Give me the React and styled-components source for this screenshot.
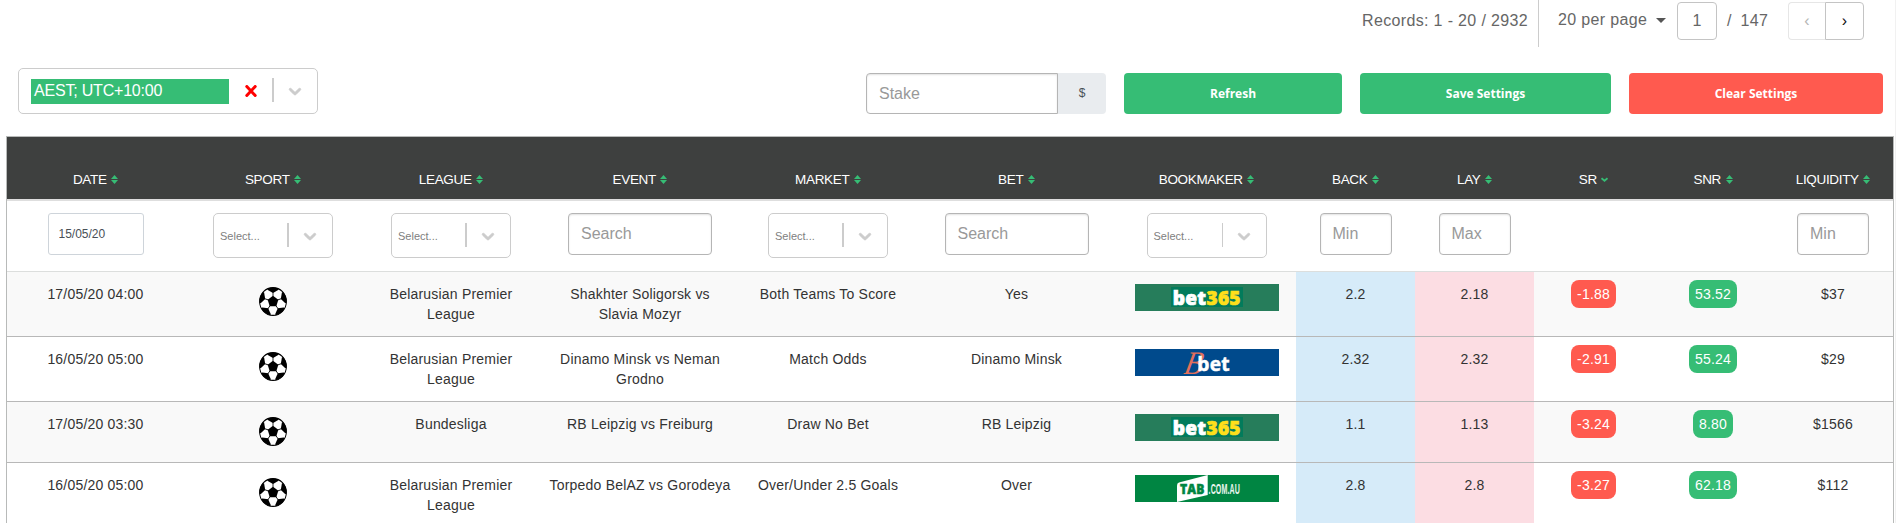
import React from 'react';
import styled, { createGlobalStyle } from 'styled-components';

const GREEN = '#36bd75';
const RED = '#ff5a4f';

const GlobalStyle = createGlobalStyle`
  * { box-sizing: border-box; }
  body {
    margin: 0;
    background: #fff;
    color: #333;
    font-family: Arial, "Liberation Sans", sans-serif;
    font-size: 14px;
    overflow: hidden;
  }
  input, button { font-family: inherit; margin: 0; }
`;

const Page = styled.div`
  height: 523px;
  overflow: hidden;
  padding: 0 1px 0 6px;
  border-right: 1px solid #f1f1f1;
`;

const Pagination = styled.div`
  height: 47px;
  display: flex;
  justify-content: flex-end;
  align-items: flex-start;
  padding-right: 30px;
  color: #666;
  font-size: 16px;
  letter-spacing: 0.35px;
  line-height: 41px;
`;

const Records = styled.div`
  height: 47px;
  padding-right: 10px;
  border-right: 1px solid #ccc;
`;

const PerPage = styled.div`
  display: flex;
  align-items: center;
  width: 128px;
  padding-left: 19px;
  line-height: 40px;
`;

const Caret = styled.span`
  margin-left: 9px;
  border: 5px solid transparent;
  border-top-color: #555;
  border-bottom: 0;
`;

const PageInput = styled.input`
  width: 40px;
  height: 38px;
  margin: 2px 10px 0;
  border: 1px solid #c4c4c4;
  border-radius: 4px;
  text-align: center;
  font-size: 16px;
  color: #666;
  padding: 0;
`;

const Total = styled.div`
  width: 61px;
  word-spacing: 4px;
  white-space: nowrap;
`;

const PageButton = styled.button`
  width: ${(p) => (p.$side === 'left' ? 37 : 39)}px;
  height: 38px;
  margin-top: 2px;
  padding: 0 0 1px;
  background: #fff;
  font-size: 16px;
  color: ${(p) => (p.$side === 'left' ? '#b5b5b5' : '#111')};
  border: 1px solid ${(p) => (p.$side === 'left' ? '#e6e6e6' : '#c4c4c4')};
  border-right-width: ${(p) => (p.$side === 'left' ? 0 : 1)}px;
  border-radius: ${(p) => (p.$side === 'left' ? '4px 0 0 4px' : '0 4px 4px 0')};
`;

const Controls = styled.div`
  height: 89px;
  display: flex;
  padding: 21px 11px 0 12px;
`;

const Zone = styled.div`
  width: 300px;
  height: 46px;
  display: flex;
  align-items: center;
  padding: 0 12px 0 12px;
  margin-right: auto;
  border: 1px solid #ccc;
  border-radius: 5px;
`;

const ZoneValue = styled.div`
  width: 198px;
  height: 25px;
  padding-left: 3px;
  background: ${GREEN};
  color: #fff;
  font-size: 16px;
  line-height: 23px;
  letter-spacing: -0.2px;
`;

const ClearMark = styled.svg`
  width: 12px;
  height: 12px;
  margin: 0 15px 0 16px;
`;

const StakeGroup = styled.div`
  display: flex;
  margin: 5px 18px 0 0;
`;

const TextInput = styled.input`
  width: ${(p) => p.$width}px;
  height: ${(p) => p.$height || 42}px;
  padding: 0 12px;
  border: 1px solid #b5b5b5;
  border-radius: ${(p) => (p.$joined ? '4px 0 0 4px' : '4px')};
  box-shadow: inset 0 1px 2px #e2e2e2;
  font-size: 16px;
  background: #fff;
  &::placeholder { color: #999; opacity: 1; }
`;

const Currency = styled.div`
  width: 48px;
  height: 41px;
  border-radius: 0 4px 4px 0;
  background: #e9ecef;
  color: #495057;
  font-size: 12px;
  line-height: 41px;
  text-align: center;
`;

const ActionButton = styled.button`
  width: ${(p) => p.$width}px;
  height: 41px;
  margin: 5px 0 0 ${(p) => p.$gap || 0}px;
  padding: 0;
  border: 0;
  border-radius: 4px;
  background: ${(p) => (p.$danger ? RED : GREEN)};
  color: #fff;
  font: 700 12px "Open Sans", sans-serif;
`;

const Table = styled.div`
  width: 1888px;
  border: 1px solid #b8bab9;
  border-bottom: 0;
`;

const Row = styled.div`
  display: grid;
  grid-template-columns: 177px 178px 178px 200px 176px 201px 179px 119px 119px 119px 120px 1fr;
`;

const HeadRow = styled(Row)`
  height: 64px;
  background: #3e403f;
  border-bottom: 2px solid #dedede;
`;

const HeadCell = styled.div`
  display: flex;
  justify-content: center;
  align-items: center;
  gap: 4.5px;
  padding-top: 23px;
  color: #fff;
  font-size: 13.5px;
  letter-spacing: -0.33px;
`;

const FilterRow = styled(Row)`
  height: 71px;
  padding-top: 12px;
  border-bottom: 1px solid #dcdedd;
`;

const FilterCell = styled.div`
  display: flex;
  justify-content: center;
  align-items: flex-start;
`;

const DateInput = styled.input`
  width: 96px;
  height: 42px;
  padding: 0 10px;
  border: 1px solid #ced4da;
  border-radius: 3px;
  color: #495057;
  font-size: 12px;
`;

const SelectBox = styled.div`
  width: 120px;
  height: 45px;
  display: flex;
  align-items: center;
  padding: 0 12px 0 6px;
  border: 1px solid #ccc;
  border-radius: 5px;
  color: #808080;
  font-size: 11px;
`;

const Separator = styled.span`
  width: ${(p) => p.$width || 2}px;
  height: 24px;
  margin: 0 11px 2px auto;
  background: #ccc;
`;

const DataRow = styled(Row)`
  background: ${(p) => (p.$striped ? '#f9f9f9' : '#fff')};
  border-bottom: 1px solid #b8b8b8;
`;

const Cell = styled.div`
  min-height: 60px;
  padding: 12px ${(p) => p.$side ?? 8}px;
  text-align: center;
  line-height: 20px;
  letter-spacing: 0.2px;
  background: ${(p) => p.$tint || 'transparent'};
`;

const MediaCell = styled(Cell)`
  display: flex;
  justify-content: center;
  align-items: flex-start;
  padding-top: ${(p) => p.$top}px;
  padding-bottom: 0;
`;

const Badge = styled.span`
  display: inline-block;
  height: 28px;
  margin: -4px 0;
  padding: 4px 6px;
  border-radius: 8px;
  background: ${(p) => (p.$danger ? RED : GREEN)};
  color: #fff;
`;

const Chevron = () => (
  <svg width="20" height="20" viewBox="0 0 20 20" fill="#ccc" stroke="#ccc" strokeWidth="0.7">
    <path d="M4.516 7.548c0.436-0.446 1.043-0.481 1.576 0l3.908 3.747 3.908-3.747c0.533-0.481 1.141-0.446 1.574 0 0.436 0.445 0.408 1.197 0 1.615-0.406 0.418-4.695 4.502-4.695 4.502-0.217 0.223-0.502 0.335-0.787 0.335s-0.57-0.112-0.789-0.335c0 0-4.287-4.084-4.695-4.502s-0.436-1.17 0-1.615z" />
  </svg>
);

const SortIcon = ({ active }) =>
  active ? (
    <svg width="7" height="9" viewBox="0 0 7 9">
      <path d="M0.5 3.2 L3.5 5.8 L6.5 3.2" fill="none" stroke={GREEN} strokeWidth="1.8" />
    </svg>
  ) : (
    <svg width="7" height="9" viewBox="0 0 7 9" fill={GREEN}>
      <path d="M3.5 0 L7 4 H0 Z M0 5 H7 L3.5 9 Z" />
    </svg>
  );

const patchAngles = [0, 72, 144, 216, 288];

const Ball = () => (
  <svg width="28" height="29" viewBox="0 0 28 28" preserveAspectRatio="none">
    <defs>
      <clipPath id="ball"><circle cx="14" cy="14" r="13.6" /></clipPath>
    </defs>
    <circle cx="14" cy="14" r="13.4" fill="#fff" />
    <g clipPath="url(#ball)">
      {patchAngles.map((a) => (
        <g key={a} transform={`rotate(${a} 14 14)`}>
          <path d="M7.4 0 L8.8 3 L14 5.8 L19.2 3 L20.6 0 Z" />
          <path d="M14 5 V9.5" stroke="#000" strokeWidth="0.8" />
        </g>
      ))}
      <path d="M14 8.5 L19.3 12.3 L17.3 18.6 H10.7 L8.7 12.3 Z" />
    </g>
    <circle cx="14" cy="14" r="13.4" fill="none" stroke="#000" strokeWidth="1" />
  </svg>
);

const logoFont = '"Open Sans", sans-serif';

const Bet365Logo = () => (
  <svg width="144" height="27">
    <rect width="144" height="27" fill="#267d5b" />
    <rect x="36" y="3" width="72" height="20" fill="#027b5b" />
    <text y="20.6" fontFamily={logoFont} fontWeight="800" fontSize="19.5" strokeWidth="0.7">
      <tspan x="37.8" fill="#fff" stroke="#fff" textLength="33.5" lengthAdjust="spacingAndGlyphs">bet</tspan>
      <tspan x="71.6" fill="#ffdf1b" stroke="#ffdf1b" textLength="34" lengthAdjust="spacingAndGlyphs">365</tspan>
    </text>
  </svg>
);

const BbetLogo = () => (
  <svg width="144" height="27" overflow="visible">
    <rect width="144" height="27" fill="#004a8c" />
    <text
      transform="translate(48 24.5) skewX(-12) scale(0.88 1)"
      fontFamily='"Liberation Serif", serif'
      fontStyle="italic"
      fontSize="33"
      fill="#e2705c"
    >B</text>
    <text x="62.3" y="22.4" fontFamily={logoFont} fontWeight="700" fontSize="19.5" fill="#fff" stroke="#fff" strokeWidth="0.5" textLength="32.4" lengthAdjust="spacingAndGlyphs">bet</text>
  </svg>
);

const TabLogo = () => (
  <svg width="144" height="27">
    <rect width="144" height="27" fill="#008542" />
    <path d="M42 10.5 Q42 8.2 44 7.6 L72.7 0 V20 L42 27 Z" fill="#fff" />
    <text x="45" y="18.6" fontFamily={logoFont} fontWeight="800" fontSize="13.4" fill="#008542" stroke="#008542" strokeWidth="0.5" textLength="24.6" lengthAdjust="spacingAndGlyphs">TAB</text>
    <text transform="translate(73.6 18.7) scale(0.512 1)" fontFamily='"Liberation Sans", sans-serif' fontWeight="700" fontSize="13.8" fill="#e9f5ee">.COM.AU</text>
  </svg>
);

const logos = { bet365: Bet365Logo, bbet: BbetLogo, tab: TabLogo };

const Select = ({ thin }) => (
  <SelectBox>
    Select...
    <Separator $width={thin ? 1 : 2} />
    <Chevron />
  </SelectBox>
);

const headings = ['DATE', 'SPORT', 'LEAGUE', 'EVENT', 'MARKET', 'BET', 'BOOKMAKER', 'BACK', 'LAY', 'SR', 'SNR', 'LIQUIDITY'];

const rows = [
  { date: '17/05/20 04:00', league: 'Belarusian Premier League', event: 'Shakhter Soligorsk vs Slavia Mozyr', market: 'Both Teams To Score', bet: 'Yes', book: 'bet365', back: '2.2', lay: '2.18', sr: '-1.88', snr: '53.52', liq: '$37' },
  { date: '16/05/20 05:00', league: 'Belarusian Premier League', event: 'Dinamo Minsk vs Neman Grodno', market: 'Match Odds', bet: 'Dinamo Minsk', book: 'bbet', back: '2.32', lay: '2.32', sr: '-2.91', snr: '55.24', liq: '$29' },
  { date: '17/05/20 03:30', league: 'Bundesliga', event: 'RB Leipzig vs Freiburg', market: 'Draw No Bet', bet: 'RB Leipzig', book: 'bet365', back: '1.1', lay: '1.13', sr: '-3.24', snr: '8.80', liq: '$1566' },
  { date: '16/05/20 05:00', league: 'Belarusian Premier League', event: 'Torpedo BelAZ vs Gorodeya', market: 'Over/Under 2.5 Goals', bet: 'Over', book: 'tab', back: '2.8', lay: '2.8', sr: '-3.27', snr: '62.18', liq: '$112' },
];

function DataLine({ row, striped }) {
  const Logo = logos[row.book];
  return (
    <DataRow $striped={striped}>
      <Cell>{row.date}</Cell>
      <MediaCell $top={15}><Ball /></MediaCell>
      <Cell $side={20}>{row.league}</Cell>
      <Cell $side={8.6}>{row.event}</Cell>
      <Cell>{row.market}</Cell>
      <Cell>{row.bet}</Cell>
      <MediaCell $top={12}><Logo /></MediaCell>
      <Cell $tint="#d6ebf9">{row.back}</Cell>
      <Cell $tint="#fcdde3">{row.lay}</Cell>
      <Cell><Badge $danger>{row.sr}</Badge></Cell>
      <Cell><Badge>{row.snr}</Badge></Cell>
      <Cell>{row.liq}</Cell>
    </DataRow>
  );
}

export default function App() {
  return (
    <Page>
      <GlobalStyle />
      <Pagination>
        <Records>Records: 1 - 20 / 2932</Records>
        <PerPage>20 per page<Caret /></PerPage>
        <PageInput defaultValue="1" />
        <Total>/ 147</Total>
        <PageButton $side="left">‹</PageButton>
        <PageButton $side="right">›</PageButton>
      </Pagination>
      <Controls>
        <Zone>
          <ZoneValue>AEST; UTC+10:00</ZoneValue>
          <ClearMark viewBox="0 0 12 12">
            <path d="M1.8 1.5 L10.2 10.5 M10.2 1.5 L1.8 10.5" stroke="#f00" strokeWidth="3" strokeLinecap="round" />
          </ClearMark>
          <Separator />
          <Chevron />
        </Zone>
        <StakeGroup>
          <TextInput $width={192} $height={41} $joined placeholder="Stake" />
          <Currency>$</Currency>
        </StakeGroup>
        <ActionButton $width={218}>Refresh</ActionButton>
        <ActionButton $width={251} $gap={18}>Save Settings</ActionButton>
        <ActionButton $width={254} $gap={18} $danger>Clear Settings</ActionButton>
      </Controls>
      <Table>
        <HeadRow>
          {headings.map((h) => (
            <HeadCell key={h}>{h}<SortIcon active={h === 'SR'} /></HeadCell>
          ))}
        </HeadRow>
        <FilterRow>
          <FilterCell><DateInput defaultValue="15/05/20" /></FilterCell>
          <FilterCell><Select /></FilterCell>
          <FilterCell><Select /></FilterCell>
          <FilterCell><TextInput $width={144} placeholder="Search" /></FilterCell>
          <FilterCell><Select /></FilterCell>
          <FilterCell><TextInput $width={144} placeholder="Search" /></FilterCell>
          <FilterCell><Select thin /></FilterCell>
          <FilterCell><TextInput $width={72} placeholder="Min" /></FilterCell>
          <FilterCell><TextInput $width={72} placeholder="Max" /></FilterCell>
          <FilterCell />
          <FilterCell />
          <FilterCell><TextInput $width={72} placeholder="Min" /></FilterCell>
        </FilterRow>
        {rows.map((row, i) => (
          <DataLine key={i} row={row} striped={i % 2 === 0} />
        ))}
      </Table>
    </Page>
  );
}
